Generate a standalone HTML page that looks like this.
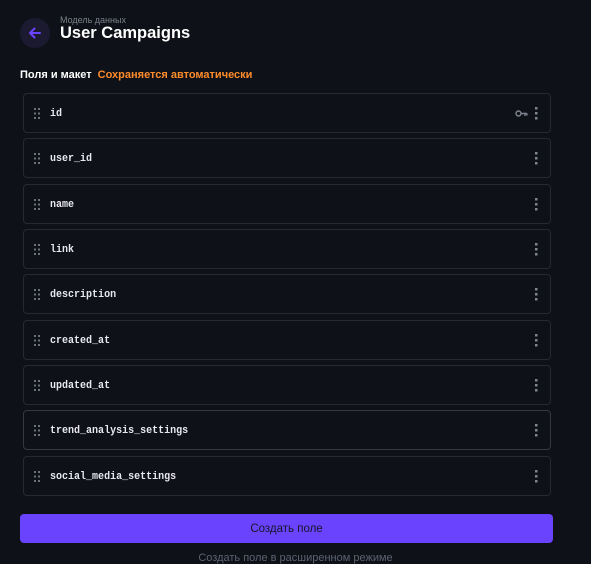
<!DOCTYPE html>
<html><head><meta charset="utf-8"><style>
*{margin:0;padding:0;box-sizing:border-box}
body{width:591px;height:560px;background:#0e1118;font-family:"Liberation Sans",sans-serif;position:relative;overflow:hidden}
.back{position:absolute;left:20px;top:18px;width:30px;height:30px;border-radius:50%;background:#1b1a31}
.sub{position:absolute;left:60px;top:15px;font-size:9px;color:#7a7f8a}
.title{position:absolute;left:60px;top:24px;font-size:16.5px;font-weight:bold;color:#fff}
.sec{position:absolute;left:20px;top:69px;font-size:11px;font-weight:bold;color:#fff}
.sec span{color:#ff8c2b;margin-left:3px}
.row{position:absolute;left:23px;width:528px;height:40px;border:1px solid #262932;border-radius:4px;background:#0e1118}
.row .n{position:absolute;left:26px;top:14px;font-family:"Liberation Mono",monospace;font-size:11px;line-height:12px;color:#e8e8ee;font-weight:bold;transform:scaleX(0.91);transform-origin:0 0}
.grip{position:absolute;left:10px;top:14px;width:6px;height:11px}
.dots{position:absolute;right:12px;top:13px;width:3px;height:13px}
.btn{position:absolute;left:20px;top:514px;width:533px;height:29px;background:#6a43fe;border-radius:4px;text-align:center;line-height:31px;font-size:11.5px;color:#171626}
.more{position:absolute;left:0;width:591px;top:552px;text-align:center;font-size:11px;color:#5c6270}
</style></head><body>
<div class="back"><svg width="30" height="30" viewBox="0 0 30 30"><path d="M20 15H10M14.5 10.5L10 15l4.5 4.5" stroke="#6a43fe" stroke-width="2" fill="none" stroke-linecap="round" stroke-linejoin="round"/></svg></div>
<div class="sub">Модель данных</div>
<div class="title">User Campaigns</div>
<div class="sec">Поля и макет <span>Сохраняется автоматически</span></div>
<svg width="0" height="0" style="position:absolute"><defs>
<g id="g"><rect x="0" y="0" width="2" height="2" fill="#6b707b"/><rect x="4" y="0" width="2" height="2" fill="#6b707b"/><rect x="0" y="4.5" width="2" height="2" fill="#6b707b"/><rect x="4" y="4.5" width="2" height="2" fill="#6b707b"/><rect x="0" y="9" width="2" height="2" fill="#6b707b"/><rect x="4" y="9" width="2" height="2" fill="#6b707b"/></g>
<g id="d"><rect x="0" y="0" width="2.5" height="2.5" fill="#80858f"/><rect x="0" y="5" width="2.5" height="2.5" fill="#80858f"/><rect x="0" y="10" width="2.5" height="2.5" fill="#80858f"/></g>
</defs></svg>
<div class="row" style="top:93px"><svg class="grip"><use href="#g"/></svg><div class="n">id</div><svg style="position:absolute;right:22px;top:15px" width="13" height="9" viewBox="0 0 13 9"><circle cx="3.5" cy="4.5" r="2.5" stroke="#80858f" stroke-width="1.4" fill="none"/><path d="M6 4.5h6M10 4.5v2.5M12 4.5v2" stroke="#80858f" stroke-width="1.4"/></svg><svg class="dots"><use href="#d"/></svg></div>
<div class="row" style="top:138px"><svg class="grip"><use href="#g"/></svg><div class="n">user_id</div><svg class="dots"><use href="#d"/></svg></div>
<div class="row" style="top:184px"><svg class="grip"><use href="#g"/></svg><div class="n">name</div><svg class="dots"><use href="#d"/></svg></div>
<div class="row" style="top:229px"><svg class="grip"><use href="#g"/></svg><div class="n">link</div><svg class="dots"><use href="#d"/></svg></div>
<div class="row" style="top:274px"><svg class="grip"><use href="#g"/></svg><div class="n">description</div><svg class="dots"><use href="#d"/></svg></div>
<div class="row" style="top:320px"><svg class="grip"><use href="#g"/></svg><div class="n">created_at</div><svg class="dots"><use href="#d"/></svg></div>
<div class="row" style="top:365px"><svg class="grip"><use href="#g"/></svg><div class="n">updated_at</div><svg class="dots"><use href="#d"/></svg></div>
<div class="row" style="top:410px;border-color:#363942"><svg class="grip"><use href="#g"/></svg><div class="n">trend_analysis_settings</div><svg class="dots"><use href="#d"/></svg></div>
<div class="row" style="top:456px"><svg class="grip"><use href="#g"/></svg><div class="n">social_media_settings</div><svg class="dots"><use href="#d"/></svg></div>
<div class="btn">Создать поле</div>
<div class="more">Создать поле в расширенном режиме</div>
</body></html>
